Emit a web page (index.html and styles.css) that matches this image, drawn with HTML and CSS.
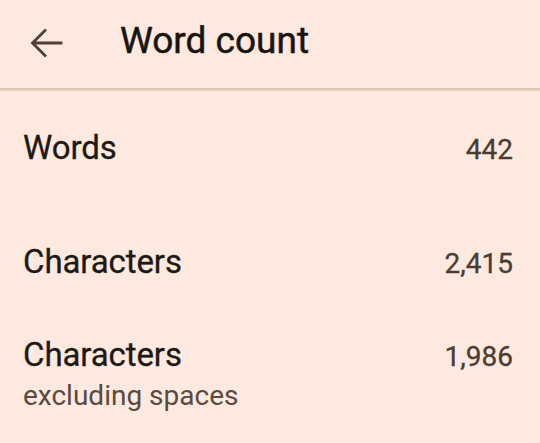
FILE: index.html
```html
<!DOCTYPE html>
<html>
<head>
<meta charset="utf-8">
<link rel="stylesheet" href="styles.css">
</head>
<body>
<div class="screen">
  <header class="appbar">
    <svg class="back" viewBox="0 0 34 32" width="34" height="32" aria-hidden="true">
      <path d="M32 16H4M16 3.5L3.5 16L16 28.5" fill="none" stroke="#4f4037" stroke-width="2.8" stroke-linecap="square"/>
    </svg>
    <h1 class="title">Word count</h1>
  </header>
  <main class="list">
    <div class="row row-words">
      <div class="label">Words</div>
      <div class="value">442</div>
    </div>
    <div class="row row-chars">
      <div class="label">Characters</div>
      <div class="value">2,415</div>
    </div>
    <div class="row row-chars-ex">
      <div class="text">
        <div class="label">Characters</div>
        <div class="sub">excluding spaces</div>
      </div>
      <div class="value">1,986</div>
    </div>
  </main>
</div>
</body>
</html>
```
FILE: styles.css
```css
html, body {
  margin: 0;
  padding: 0;
  background: #fde9df;
}
body {
  font-family: Roboto, "Noto Sans", sans-serif;
  color: #1f1914;
  width: 540px;
  height: 443px;
  overflow: hidden;
}
.screen {
  display: flex;
  flex-direction: column;
}
.appbar {
  height: 88px;
  display: flex;
  align-items: center;
  padding-left: 29px;
  border-bottom: 2px solid #dcc7b9;
  box-shadow: 0 1px 1px rgba(190, 160, 140, 0.25);
}
.back {
  display: block;
  margin-top: -3px;
}
.title {
  margin: -6px 0 0 57px;
  font-size: 37px;
  font-weight: 400;
  line-height: 44px;
  color: #1a1410;
  -webkit-text-stroke: 0.5px #1a1410;
}
.list {
  display: flex;
  flex-direction: column;
  padding: 38px 27px 0 23px;
}
.row {
  display: flex;
  justify-content: space-between;
  align-items: baseline;
}
.row-chars {
  margin-top: 72px;
}
.row-chars-ex {
  margin-top: 51px;
}
.label {
  font-size: 33px;
  line-height: 40px;
  color: #1f1914;
  letter-spacing: -0.1px;
  -webkit-text-stroke: 0.3px #1f1914;
}
.value {
  font-size: 28px;
  line-height: 40px;
  color: #4a3c33;
  -webkit-text-stroke: 0.3px #4a3c33;
}
.sub {
  margin-top: 3px;
  font-size: 28px;
  line-height: 36px;
  color: #5a4a40;
}
```
